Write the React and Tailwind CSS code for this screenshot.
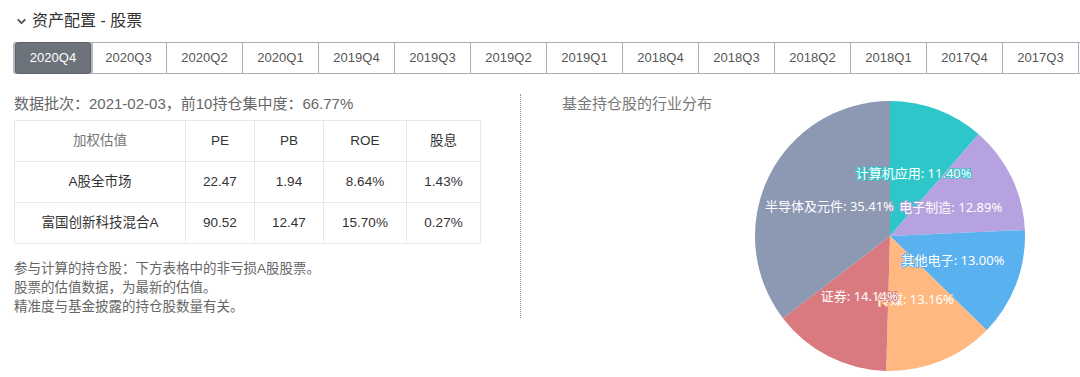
import { ChevronDown } from "lucide-react";

const quarters = [
    "2020Q4", "2020Q3", "2020Q2", "2020Q1",
    "2019Q4", "2019Q3", "2019Q2", "2019Q1",
    "2018Q4", "2018Q3", "2018Q2", "2018Q1",
    "2017Q4", "2017Q3", "2017Q2", "2017Q1",
];

const rows = [
    { name: "A股全市场", pe: "22.47", pb: "1.94", roe: "8.64%", dy: "1.43%" },
    { name: "富国创新科技混合A", pe: "90.52", pb: "12.47", roe: "15.70%", dy: "0.27%" },
];

const slices = [
    { label: "计算机应用", value: 11.4, color: "#2ec7c9" },
    { label: "电子制造", value: 12.89, color: "#b6a2de" },
    { label: "其他电子", value: 13.0, color: "#5ab1ef" },
    { label: "传媒", value: 13.16, color: "#ffb980" },
    { label: "证券", value: 14.14, color: "#d87a80" },
    { label: "半导体及元件", value: 35.41, color: "#8d98b3" },
];

const font = { fontFamily: '"Liberation Sans", "Noto Sans CJK SC", sans-serif' };

// pie drawn clockwise from 12 o'clock
function Pie() {
    const cx = 140;
    const cy = 140;
    const r = 135;
    const total = slices.reduce((s, d) => s + d.value, 0);
    let acc = 0;
    const pt = (a, rad) => [cx + rad * Math.sin(a), cy - rad * Math.cos(a)];
    const parts = slices.map((d) => {
        const a0 = (acc / total) * Math.PI * 2;
        acc += d.value;
        const a1 = (acc / total) * Math.PI * 2;
        const [x0, y0] = pt(a0, r);
        const [x1, y1] = pt(a1, r);
        const large = a1 - a0 > Math.PI ? 1 : 0;
        const [lx, ly] = pt((a0 + a1) / 2, r / 2);
        return {
            ...d,
            path: `M${cx},${cy} L${x0},${y0} A${r},${r} 0 ${large} 1 ${x1},${y1} Z`,
            lx,
            ly,
        };
    });
    return (
        <svg width="280" height="280" viewBox="0 0 280 280">
            {parts.map((p) => (
                <path key={p.label} d={p.path} fill={p.color} />
            ))}
            {parts.map((p) => (
                <text
                    key={p.label + "t"}
                    x={p.lx}
                    y={p.ly}
                    textAnchor="middle"
                    dominantBaseline="central"
                    fontSize="13"
                    fill="#fff"
                    stroke={p.color}
                    strokeWidth="2"
                    paintOrder="stroke"
                    style={{ fontFamily: '"Noto Sans", "Noto Sans CJK SC", sans-serif' }}
                >
                    {p.label}: {p.value.toFixed(2)}%
                </text>
            ))}
        </svg>
    );
}

export default function App() {
    return (
        <div className="w-[1080px] h-[377px] bg-white overflow-hidden" style={font}>
            <div className="h-[42px] flex items-center pl-[15px] text-[16px] text-[#333]">
                <ChevronDown size={13} strokeWidth={3.5} className="text-[#555] mr-[4px]" />
                <span>资产配置 - 股票</span>
            </div>

            <div className="flex pl-[15px] h-[32px] overflow-hidden">
                {quarters.map((q, i) => (
                    <div
                        key={q}
                        className={
                            i === 0
                                ? "shrink-0 w-[76px] h-[32px] flex items-center justify-center text-[13px] text-white bg-[#6c737b] border border-[#5d636b] rounded-[3px] ring-2 ring-[#b4b9bf] relative z-10"
                                : "shrink-0 w-[76px] h-[32px] flex items-center justify-center text-[13px] text-[#555] bg-white border-y border-r border-[#a9aeb4]"
                        }
                    >
                        {q}
                    </div>
                ))}
            </div>

            <div className="flex items-start mt-[20px]">
                <div className="w-[507px] ml-[14px] border-r border-dotted border-[#999] pb-[2px]">
                    <div className="text-[15px] leading-[20px] text-[#666]">
                        数据批次：2021-02-03，前10持仓集中度：66.77%
                    </div>
                    <table className="mt-[6px] border-collapse text-[13.5px] text-[#333] text-center">
                        <thead>
                            <tr className="h-[41px]">
                                <th className="w-[171px] border border-[#e6e9ed] font-normal text-[#777]">加权估值</th>
                                <th className="w-[69px] border border-[#e6e9ed] font-normal">PE</th>
                                <th className="w-[69px] border border-[#e6e9ed] font-normal">PB</th>
                                <th className="w-[83px] border border-[#e6e9ed] font-normal">ROE</th>
                                <th className="w-[74px] border border-[#e6e9ed] font-normal">股息</th>
                            </tr>
                        </thead>
                        <tbody>
                            {rows.map((r) => (
                                <tr key={r.name} className="h-[41px]">
                                    <td className="border border-[#e6e9ed]">{r.name}</td>
                                    <td className="border border-[#e6e9ed]">{r.pe}</td>
                                    <td className="border border-[#e6e9ed]">{r.pb}</td>
                                    <td className="border border-[#e6e9ed]">{r.roe}</td>
                                    <td className="border border-[#e6e9ed]">{r.dy}</td>
                                </tr>
                            ))}
                        </tbody>
                    </table>
                    <div className="mt-[15px] text-[13.5px] leading-[19px] text-[#666]">
                        <p>参与计算的持仓股：下方表格中的非亏损A股股票。</p>
                        <p>股票的估值数据，为最新的估值。</p>
                        <p>精准度与基金披露的持仓股数量有关。</p>
                    </div>
                </div>

                <div className="flex items-start pl-[41px]">
                    <div className="w-[188px] text-[15px] leading-[20px] text-[#777]">
                        基金持仓股的行业分布
                    </div>
                    <div className="mt-[2px]">
                        <Pie />
                    </div>
                </div>
            </div>
        </div>
    );
}
